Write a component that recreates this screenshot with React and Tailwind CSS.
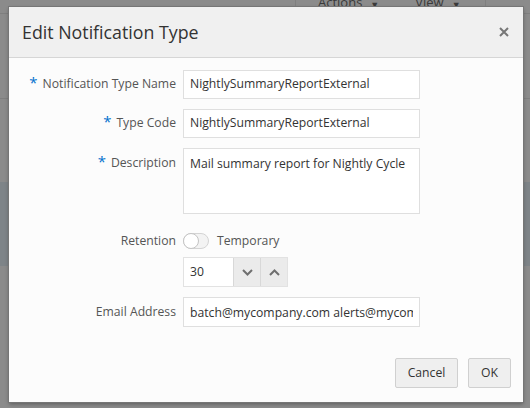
import React from "react";

const font = { fontFamily: '"Open Sans", "Noto Sans", sans-serif' };

function Label({ children, required, top }) {
  return (
    <div
      className={`w-[167px] shrink-0 text-right text-[12.2px] text-[#555] ${top ? "pt-[6px]" : "self-center"}`}
    >
      {required && <span className="mr-[5px] text-[15px] leading-none text-[#0572ce]">*</span>}
      {children}
    </div>
  );
}

function Chevron({ up }) {
  return (
    <svg width="11" height="7" viewBox="0 0 11 7" fill="none">
      <path
        d={up ? "M1 6 L5.5 1.5 L10 6" : "M1 1 L5.5 5.5 L10 1"}
        stroke="#6f6f6f"
        strokeWidth="2"
      />
    </svg>
  );
}

export default function App() {
  return (
    <div className="relative h-[408px] w-[530px] overflow-hidden bg-[#8b8b8b]" style={font}>
      {/* page behind the dialog, dimmed */}
      <div className="flex h-[14px] items-start border-b border-[#7f7f7f] text-[13px] leading-none text-[#3a3a3a]">
        <div className="ml-[295px] h-full border-l border-[#7f7f7f]" />
        <span className="-mt-[4px] ml-[22px]">Actions</span>
        <span className="ml-[8px] text-[9px]">▼</span>
        <span className="-mt-[4px] ml-[36px]">View</span>
        <span className="ml-[8px] text-[9px]">▼</span>
        <div className="ml-[24px] h-full border-l border-[#7f7f7f]" />
      </div>
      <div className="mt-[84px] h-px bg-[#7f7f7f]" />
      <div className="mt-[83px] h-[84px] bg-[#7e8488]" />

      <div className="absolute left-[9px] top-[7px] flex h-[395px] w-[514px] flex-col bg-[#fcfcfc] shadow-[0_0_0_1px_#767676,0_2px_4px_rgba(0,0,0,0.35)]">
        <div className="flex h-[51px] shrink-0 items-center justify-between border-b border-[#d6d6d6] bg-[#f0f0f0] pl-[13px] pr-[14px]">
          <span className="text-[17.8px] text-[#333]">Edit Notification Type</span>
          <svg width="10" height="10" viewBox="0 0 10 10">
            <path d="M1 1 L9 9 M9 1 L1 9" stroke="#777" strokeWidth="2" />
          </svg>
        </div>

        <div className="flex flex-col pt-[12px] text-[12.2px] text-[#333]">
          <div className="flex gap-[7px]">
            <Label required>Notification Type Name</Label>
            <div className="flex h-[29px] w-[237px] items-center border border-[#dfdfdf] bg-white px-[6px]">
              NightlySummaryReportExternal
            </div>
          </div>

          <div className="mt-[10px] flex gap-[7px]">
            <Label required>Type Code</Label>
            <div className="flex h-[29px] w-[237px] items-center border border-[#dfdfdf] bg-white px-[6px]">
              NightlySummaryReportExternal
            </div>
          </div>

          <div className="mt-[10px] flex gap-[7px]">
            <Label required top>Description</Label>
            <div className="h-[66px] w-[237px] border border-[#dfdfdf] bg-white px-[6px] pt-[6px]">
              Mail summary report for Nightly Cycle
            </div>
          </div>

          <div className="mt-[18px] flex gap-[7px]">
            <Label>Retention</Label>
            <div className="flex items-center gap-[8px] text-[#555]">
              <div className="flex h-[16px] w-[26px] items-center rounded-full border border-[#d4d4d4] bg-[#f3f3f3]">
                <div className="-ml-px h-[16px] w-[16px] rounded-full border border-[#c4c4c4] bg-white" />
              </div>
              Temporary
            </div>
          </div>

          <div className="mt-[7px] flex gap-[7px]">
            <div className="w-[167px] shrink-0" />
            <div className="flex h-[30px] w-[105px] border border-[#e2e2e2] bg-white">
              <div className="flex flex-1 items-center px-[6px]">30</div>
              <div className="flex w-[27px] items-center justify-center border-l border-[#d8d8d8] bg-[#ebebeb]">
                <Chevron />
              </div>
              <div className="flex w-[27px] items-center justify-center border-l border-[#d8d8d8] bg-[#ebebeb]">
                <Chevron up />
              </div>
            </div>
          </div>

          <div className="mt-[10px] flex gap-[7px]">
            <Label>Email Address</Label>
            <input
              readOnly
              value="batch@mycompany.com alerts@mycompany.com"
              className="h-[30px] w-[237px] border border-[#dfdfdf] bg-white px-[6px] text-[#333] outline-none"
            />
          </div>
        </div>

        <div className="mt-auto mb-[14px] flex justify-end gap-[10px] pr-[12px] text-[12.2px] text-[#333]">
          <button className="h-[30px] w-[63px] rounded-[2px] border border-[#d0d0d0] bg-[#efefef]">Cancel</button>
          <button className="h-[30px] w-[43px] rounded-[2px] border border-[#d0d0d0] bg-[#efefef]">OK</button>
        </div>
      </div>
    </div>
  );
}
